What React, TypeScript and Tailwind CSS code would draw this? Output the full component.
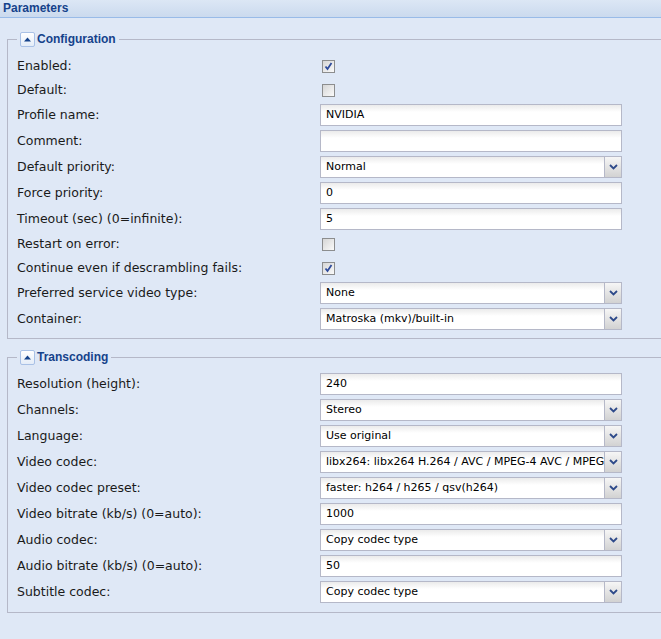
import React from "react"

type Field =
  | { label: string; kind: "check"; checked: boolean }
  | { label: string; kind: "text"; value: string }
  | { label: string; kind: "select"; value: string }

const configFields: Field[] = [
  { label: "Enabled:", kind: "check", checked: true },
  { label: "Default:", kind: "check", checked: false },
  { label: "Profile name:", kind: "text", value: "NVIDIA" },
  { label: "Comment:", kind: "text", value: "" },
  { label: "Default priority:", kind: "select", value: "Normal" },
  { label: "Force priority:", kind: "text", value: "0" },
  { label: "Timeout (sec) (0=infinite):", kind: "text", value: "5" },
  { label: "Restart on error:", kind: "check", checked: false },
  { label: "Continue even if descrambling fails:", kind: "check", checked: true },
  { label: "Preferred service video type:", kind: "select", value: "None" },
  { label: "Container:", kind: "select", value: "Matroska (mkv)/built-in" },
]

const transcodingFields: Field[] = [
  { label: "Resolution (height):", kind: "text", value: "240" },
  { label: "Channels:", kind: "select", value: "Stereo" },
  { label: "Language:", kind: "select", value: "Use original" },
  { label: "Video codec:", kind: "select", value: "libx264: libx264 H.264 / AVC / MPEG-4 AVC / MPEG-4 part 10" },
  { label: "Video codec preset:", kind: "select", value: "faster: h264 / h265 / qsv(h264)" },
  { label: "Video bitrate (kb/s) (0=auto):", kind: "text", value: "1000" },
  { label: "Audio codec:", kind: "select", value: "Copy codec type" },
  { label: "Audio bitrate (kb/s) (0=auto):", kind: "text", value: "50" },
  { label: "Subtitle codec:", kind: "select", value: "Copy codec type" },
]

function Checkbox({ checked }: { checked: boolean }) {
  return (
    <div className="ml-[2px] flex h-[13px] w-[13px] items-center justify-center border border-[#8c8d8e] bg-gradient-to-br from-[#d6d6d6] to-[#fafafa]">
      {checked && (
        <svg width="9" height="9" viewBox="0 0 9 9">
          <path d="M1.5 4.5 L3.5 7 L7.5 1" fill="none" stroke="#2f4c9c" strokeWidth="1.8" />
        </svg>
      )}
    </div>
  )
}

function TextBox({ value }: { value: string }) {
  return (
    <div className="h-[22px] w-[302px] border border-[#b5b8c8] bg-gradient-to-b from-[#ebebeb] via-white via-[35%] to-white pl-[5px] text-[11px] leading-[20px] text-black">
      {value}
    </div>
  )
}

function SelectBox({ value }: { value: string }) {
  return (
    <div className="flex h-[22px] w-[302px] border border-[#b5b8c8] bg-gradient-to-b from-[#ebebeb] via-white via-[35%] to-white text-[11px] text-black">
      <div className="flex-1 overflow-hidden whitespace-nowrap pl-[5px] leading-[20px]">{value}</div>
      <div className="flex w-[17px] items-center justify-center border-l border-[#b5b8c8] bg-gradient-to-b from-[#f6f6f6] to-[#d2d2d2]">
        <svg width="9" height="6" viewBox="0 0 9 6">
          <path d="M1 1 L4.5 4.5 L8 1" fill="none" stroke="#2e4a8a" strokeWidth="1.8" />
        </svg>
      </div>
    </div>
  )
}

function FieldRow({ field }: { field: Field }) {
  return (
    <div className={`grid grid-cols-[303px_302px] items-center ${field.kind === "check" ? "h-[20px]" : "h-[22px]"}`}>
      <div className="whitespace-nowrap text-[#1a1a1a]">{field.label}</div>
      {field.kind === "check" && <Checkbox checked={field.checked} />}
      {field.kind === "text" && <TextBox value={field.value} />}
      {field.kind === "select" && <SelectBox value={field.value} />}
    </div>
  )
}

function Section({ title, fields, first }: { title: string; fields: Field[]; first?: boolean }) {
  return (
    <fieldset
      className={`mr-[-20px] ml-[7px] border border-[#b5b8c8] pr-0 pl-[9px] ${first ? "pb-[8px]" : "pb-[9px]"}`}
    >
      <legend className="flex items-center px-[3px]">
        <span className="flex h-[15px] w-[15px] items-center justify-center rounded-[2px] border border-[#a9c1e6] bg-gradient-to-b from-white to-[#e4ecf8]">
          <svg width="7" height="5" viewBox="0 0 7 5">
            <path d="M0 4.5 L3.5 0.5 L7 4.5 Z" fill="#15428b" />
          </svg>
        </span>
        <span
          className="ml-[2px] text-[12px] font-bold leading-[16px] text-[#15428b]"
          style={{ fontFamily: '"Liberation Sans", Arial, sans-serif' }}
        >
          {title}
        </span>
      </legend>
      <div className={`flex flex-col gap-[4px] ${first ? "pt-[9px]" : "pt-[8px]"}`}>
        {fields.map((f) => (
          <FieldRow key={f.label} field={f} />
        ))}
      </div>
    </fieldset>
  )
}

export default function App() {
  return (
    <div
      className="h-[639px] w-[661px] overflow-hidden bg-[#dfe8f6] text-[12.5px]"
      style={{ fontFamily: '"DejaVu Sans", Verdana, sans-serif' }}
    >
      <div
        className="h-[18px] border-b border-[#99bbe8] bg-gradient-to-b from-[#dce7f5] to-[#cbdaee] px-[3px] text-[12px] font-bold leading-[17px] text-[#15428b]"
        style={{ fontFamily: '"Liberation Sans", Arial, sans-serif' }}
      >
        Parameters
      </div>
      <div className="mt-[13px]">
        <Section title="Configuration" fields={configFields} first />
      </div>
      <div className="mt-[10px]">
        <Section title="Transcoding" fields={transcodingFields} />
      </div>
    </div>
  )
}
